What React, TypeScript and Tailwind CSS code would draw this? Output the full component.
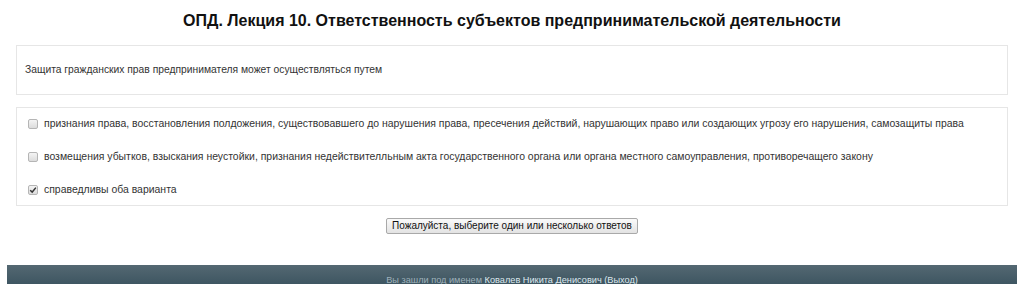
const options = [
  {
    text: "признания права, восстановления полдожения, существовавшего до нарушения права, пресечения действий, нарушающих право или создающих угрозу его нарушения, самозащиты права",
    checked: false,
  },
  {
    text: "возмещения убытков, взыскания неустойки, признания недействителльным акта государственного органа или органа местного самоуправления, противоречащего закону",
    checked: false,
  },
  { text: "справедливы оба варианта", checked: true },
];

function Box({ checked }: { checked: boolean }) {
  return (
    <span className="flex h-[10px] w-[10px] shrink-0 items-center justify-center rounded-[2px] border border-[#b5b5b5] bg-gradient-to-b from-[#f4f4f4] to-[#dcdcdc]">
      {checked && (
        <svg viewBox="0 0 10 10" className="h-[8px] w-[8px]">
          <path d="M1.5 5.2 L4 7.6 L8.6 2" fill="none" stroke="#333" strokeWidth="1.8" />
        </svg>
      )}
    </span>
  );
}

export default function App() {
  return (
    <div className="h-[284px] w-[1024px] overflow-hidden bg-white font-['Liberation_Sans',Arial,sans-serif] text-[#333]">
      <h1 className="pt-[11px] text-center text-[16px] font-bold leading-[19px] text-[#111]">
        ОПД. Лекция 10. Ответственность субъектов предпринимательской деятельности
      </h1>

      <div className="mx-4 mt-[15px] flex h-[50px] items-center border border-[#e6e6e6] px-[8px] text-[10.3px]">
        Защита гражданских прав предпринимателя может осуществляться путем
      </div>

      <div className="mx-4 mt-[12px] flex h-[99px] flex-col justify-center gap-[19px] border border-[#e6e6e6] pl-[11px] text-[10.45px]">
        {options.map((o) => (
          <label key={o.text} className="flex items-center gap-[6px] leading-[14px]">
            <Box checked={o.checked} />
            <span>{o.text}</span>
          </label>
        ))}
      </div>

      <div className="mt-[12px] flex justify-center">
        <button className="h-[16px] rounded-[2px] border border-[#a9a9a9] bg-gradient-to-b from-[#fafafa] to-[#e3e3e3] px-[5px] text-[10px] leading-[14px] text-[#111]">
          Пожалуйста, выберите один или несколько ответов
        </button>
      </div>

      <div className="mx-[7px] mt-[31px] h-[20px] bg-gradient-to-b from-[#546872] to-[#3d5561] pt-[9px] text-center text-[9.2px] leading-[12px] text-[#9fb1ba]">
        Вы зашли под именем <span className="text-[#dde8ee]">Ковалев Никита Денисович (Выход)</span>
      </div>
    </div>
  );
}
